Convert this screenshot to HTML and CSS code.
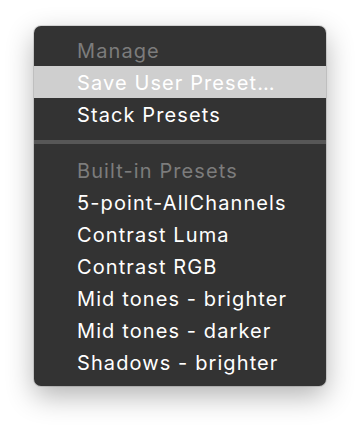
FILE: index.html
```html
<!DOCTYPE html>
<html>
<head>
  <title>Presets Menu</title>
  <link rel="stylesheet" href="styles.css">
</head>
<body>

<div class="menu">
  <div class="item header">Manage</div>
  <div class="item selected">Save User Preset…</div>
  <div class="item">Stack Presets</div>
  <div class="separator"></div>
  <div class="item header">Built-in Presets</div>
  <div class="item">5-point-AllChannels</div>
  <div class="item">Contrast Luma</div>
  <div class="item">Contrast RGB</div>
  <div class="item">Mid tones - brighter</div>
  <div class="item">Mid tones - darker</div>
  <div class="item">Shadows - brighter</div>
</div>

</body>
</html>
```

FILE: styles.css
```css
* {
  box-sizing: border-box;
  font-family: Inter, "Noto Sans", sans-serif;
}

html, body {
  background: #ffffff;
  margin: 0;
  min-height: 100vh;
}

body {
  padding: 26px 0 0 34px;
}

.menu {
  width: 292px;
  background: #333333;
  border-radius: 7px;
  padding: 8px 0;
  box-shadow: 0 10px 28px rgba(0,0,0,0.3), 0 0 0 1px rgba(0,0,0,0.12);
}

.item {
  height: 32px;
  line-height: 30px;
  padding-top: 2px;
  padding-left: 43px;
  font-size: 20px;
  letter-spacing: 1.1px;
  color: #ffffff;
  white-space: nowrap;
}

.item.header {
  color: #7c7c7c;
}

.item.selected {
  background: #cfcfcf;
  color: #ffffff;
}

.separator {
  height: 4px;
  background: #575757;
  margin: 10px 0;
}
```
